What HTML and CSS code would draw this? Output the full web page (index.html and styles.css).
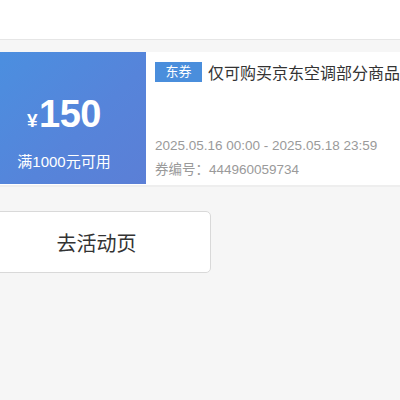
FILE: index.html
```html
<!DOCTYPE html>
<html lang="zh-CN">
<head>
    <meta charset="UTF-8">
    <meta name="viewport" content="width=device-width, initial-scale=1.0">
    <link rel="stylesheet" href="styles.css">
    <title>优惠券</title>
</head>
<body>
    <div class="topbar"></div>

    <div class="page">
        <div class="coupon">
            <div class="coupon-left">
                <div class="price"><span class="yen">¥</span>150</div>
                <div class="limit">满1000元可用</div>
            </div>
            <div class="coupon-right">
                <div class="title-row">
                    <span class="tag">东券</span>
                    <span class="title">仅可购买京东空调部分商品</span>
                </div>
                <div class="meta">
                    <p>2025.05.16 00:00 - 2025.05.18 23:59</p>
                    <p>券编号：444960059734</p>
                </div>
            </div>
        </div>

        <button class="go-btn">去活动页</button>
    </div>
</body>
</html>
```

FILE: styles.css
```css
body {
    margin: 0;
    padding: 0;
    background-color: #f6f6f6;
    font-family: "Liberation Sans", "Noto Sans CJK SC", sans-serif;
    overflow: hidden;
}

.topbar {
    height: 39px;
    background-color: #fff;
    border-bottom: 1px solid #e6e6e6;
}

.page {
    margin-left: -18px;
    padding-top: 12px;
}

.coupon {
    display: flex;
    width: 420px;
    height: 132px;
    background-color: #fff;
    border-bottom: 1px solid #fff;
    box-shadow: 0 2px 0 #eeeeee;
}

.coupon-left {
    width: 164px;
    background: linear-gradient(135deg, #4a90e0 0%, #5684da 60%, #5b7fd6 100%);
    color: #fff;
    display: flex;
    flex-direction: column;
    align-items: center;
}

.price {
    margin-top: 42px;
    font-size: 38px;
    font-weight: bold;
    line-height: 40px;
    letter-spacing: -0.5px;
}

.yen {
    font-size: 19px;
    font-weight: bold;
    margin-right: 2px;
}

.limit {
    margin-top: 12px;
    font-size: 15px;
    line-height: 18px;
}

.coupon-right {
    flex: 1;
    padding: 8px 0 0 9px;
    display: flex;
    flex-direction: column;
    justify-content: space-between;
}

.title-row {
    display: flex;
    align-items: center;
}

.tag {
    background-color: #4a8edc;
    color: #fff;
    font-size: 13px;
    width: 47px;
    height: 20px;
    line-height: 20px;
    text-align: center;
    margin-right: 6px;
}

.title {
    font-size: 16px;
    color: #333;
    white-space: nowrap;
}

.meta {
    padding-bottom: 2px;
}

.meta p {
    margin: 0;
    font-size: 13.5px;
    color: #9a9a9a;
    line-height: 24px;
    white-space: nowrap;
}

.go-btn {
    display: block;
    margin-top: 26px;
    width: 229px;
    height: 62px;
    background-color: #fff;
    border: 1px solid #d9d9d9;
    border-radius: 5px;
    font-family: "Liberation Sans", "Noto Sans CJK SC", sans-serif;
    font-size: 20px;
    color: #333;
    cursor: pointer;
}
```
